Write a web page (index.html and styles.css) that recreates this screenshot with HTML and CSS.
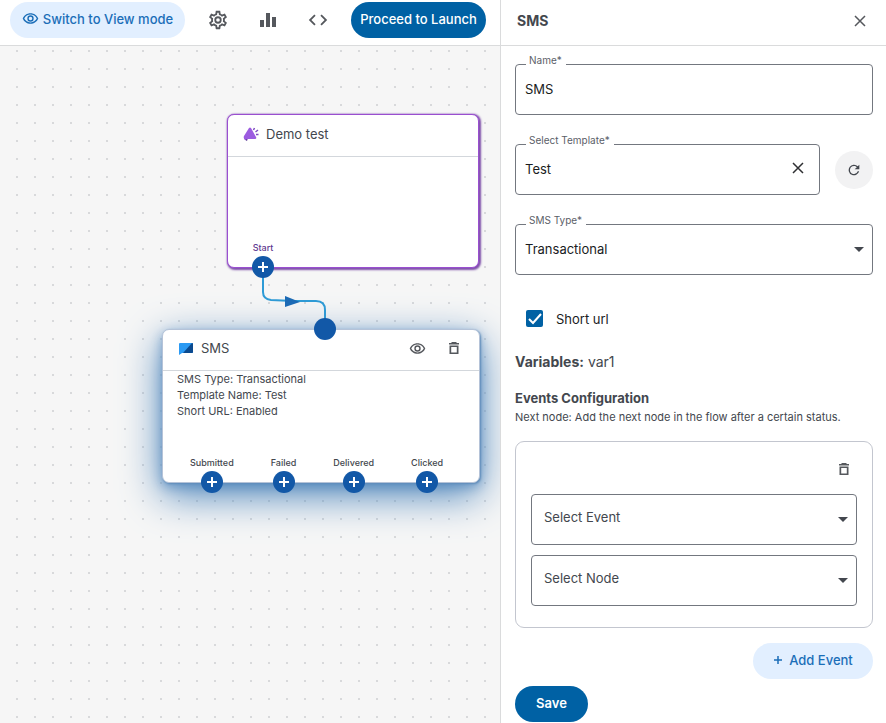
FILE: index.html
```html
<!DOCTYPE html>
<html lang="en">
  <head>
    <meta charset="UTF-8" />
    <meta name="viewport" content="width=device-width, initial-scale=1.0" />
    <title>Campaign Flow</title>
    <link rel="stylesheet" href="styles.css">
  </head>
  <body>
    <main class="workspace">
      <header class="toolbar">
        <button type="button" class="btn btn-light btn-view">
          <svg class="icon" viewBox="0 0 24 24" width="17" height="17"><path d="M12 6.500c3.800 0 7.200 2.100 8.800 5.500-1.600 3.400-5 5.500-8.800 5.500S4.800 15.400 3.200 12C4.800 8.600 8.200 6.500 12 6.500m0-2C7 4.500 2.700 7.600 1 12c1.700 4.400 6 7.500 11 7.500s9.300-3.100 11-7.500c-1.700-4.400-6-7.500-11-7.500zm0 5a2.500 2.500 0 0 1 0 5 2.500 2.500 0 0 1 0-5m0-2a4.500 4.500 0 1 0 0 9 4.500 4.500 0 0 0 0-9z"/></svg>
          Switch to View mode
        </button>
        <div class="tools">
          <button type="button" class="icon-btn" aria-label="Settings">
            <svg class="icon" viewBox="0 0 24 24" width="22" height="22"><path d="M19.430 12.980c.04-.32.07-.64.07-.98s-.03-.66-.07-.98l2.110-1.650c.19-.15.24-.42.12-.64l-2-3.460c-.09-.16-.26-.25-.44-.25-.06 0-.12.010-.17.030l-2.490 1c-.52-.4-1.080-.73-1.690-.98l-.38-2.650C14.460 2.180 14.250 2 14 2h-4c-.25 0-.46.18-.49.42l-.38 2.650c-.61.25-1.170.59-1.690.98l-2.490-1c-.06-.02-.12-.03-.18-.03-.17 0-.34.09-.43.25l-2 3.460c-.13.22-.07.49.12.64l2.110 1.650c-.04.32-.07.65-.07.98s.03.66.07.98l-2.110 1.650c-.19.15-.24.42-.12.64l2 3.460c.09.16.26.25.44.25.06 0 .12-.01.17-.03l2.490-1c.52.4 1.080.73 1.690.98l.38 2.650c.03.24.24.42.49.42h4c.25 0 .46-.18.49-.42l.38-2.650c.61-.25 1.170-.59 1.690-.98l2.490 1c.06.02.12.03.18.03.17 0 .34-.09.43-.25l2-3.460c.12-.22.07-.49-.12-.64zm-1.980-1.710c.04.31.05.52.05.73s-.02.43-.05.73l-.14 1.130.89.7 1.080.84-.7 1.210-1.270-.51-1.040-.42-.9.68c-.43.32-.84.56-1.250.73l-1.060.43-.16 1.130-.2 1.350h-1.400l-.19-1.350-.16-1.130-1.060-.43c-.43-.18-.83-.41-1.230-.71l-.91-.7-1.060.43-1.270.51-.7-1.210 1.080-.84.89-.7-.14-1.130c-.03-.31-.05-.54-.05-.74s.02-.43.05-.73l.14-1.130-.89-.7-1.080-.84.7-1.210 1.270.51 1.040.42.9-.68c.43-.32.84-.56 1.250-.73l1.060-.43.16-1.130.2-1.350h1.390l.19 1.350.16 1.130 1.060.43c.43.18.83.41 1.230.71l.91.7 1.060-.43 1.270-.51.7 1.210-1.070.85-.89.7zM12 8a4 4 0 1 0 0 8 4 4 0 0 0 0-8m0 6a2 2 0 1 1 0-4 2 2 0 0 1 0 4z"/></svg>
          </button>
          <button type="button" class="icon-btn" aria-label="Analytics">
            <svg class="icon" viewBox="0 0 22 22" width="22" height="22"><path d="M3 11h4v7H3zM9 4h4v14H9zM15 8h4v10h-4z"/></svg>
          </button>
          <button type="button" class="icon-btn" aria-label="Code">
            <svg class="icon" viewBox="0 0 24 24" width="22" height="22"><path d="M9.400 16.600 4.800 12l4.600-4.600L8 6l-6 6 6 6zm5.200 0 4.600-4.600-4.600-4.600L16 6l6 6-6 6z"/></svg>
          </button>
        </div>
        <button type="button" class="btn btn-primary btn-launch">Proceed to Launch</button>
      </header>

      <section class="canvas">
        <svg class="edge" width="80" height="60" viewBox="0 0 80 60">
          <path class="edge-line" d="M9 0v16q0 7 8 8l22 1h23q9 0 9 9v14"/>
          <path class="edge-arrow" d="M31 20v11l15-5z"/>
        </svg>

        <article class="node node-start">
          <div class="node-head">
            <svg viewBox="0 0 16 16" width="16" height="16">
              <path fill="#5c3a96" d="M1 10q0 4 3 5l1-3z"/>
              <path fill="#9c5be0" d="M6 2q1-1 2 0l5 9q1 2-1 2H4l-2 1q-2-2-1-4z"/>
              <path fill="none" stroke="#7e4cc0" stroke-width="1.500" d="M10.500 4l1-2M12.500 6l2.500-2M13 8.500h2.500"/>
            </svg>
            <span class="node-title">Demo test</span>
          </div>
          <div class="ports">
            <div class="port">
              <span>Start</span>
              <button type="button" class="handle" aria-label="Add after start"><svg viewBox="0 0 10 10" width="10" height="10"><path d="M5 0v10M0 5h10"/></svg></button>
            </div>
          </div>
        </article>

        <article class="node node-sms">
          <span class="target"></span>
          <div class="node-head">
            <svg viewBox="0 0 16 16" width="16" height="16">
              <path fill="#2b9af3" d="M2 3h12q1 0 1 1v8q0 1-1 1H4l-3 2V4q0-1 1-1z"/>
              <path fill="#0b4a8f" d="M15 4v8q0 1-1 1H5l9-10q1 0 1 1z"/>
            </svg>
            <span class="node-title">SMS</span>
            <div class="node-actions">
              <button type="button" class="icon-btn" aria-label="Preview">
                <svg class="icon" viewBox="0 0 24 24" width="17" height="17"><path d="M12 6.500c3.800 0 7.200 2.100 8.800 5.500-1.600 3.400-5 5.500-8.800 5.500S4.800 15.400 3.200 12C4.800 8.600 8.200 6.500 12 6.500m0-2C7 4.500 2.700 7.600 1 12c1.700 4.400 6 7.500 11 7.500s9.300-3.100 11-7.500c-1.700-4.400-6-7.500-11-7.500zm0 5a2.500 2.500 0 0 1 0 5 2.500 2.500 0 0 1 0-5m0-2a4.500 4.500 0 1 0 0 9 4.500 4.500 0 0 0 0-9z"/></svg>
              </button>
              <button type="button" class="icon-btn" aria-label="Delete node">
                <svg class="icon" viewBox="0 0 16 16" width="16" height="16"><path d="M3 3h2l1-1h4l1 1h2v1.500H3zM3.500 5.500h9V14h-9zM5.200 7v5.500h5.600V7z" fill-rule="evenodd"/></svg>
              </button>
            </div>
          </div>
          <div class="node-body">
            <p>SMS Type: Transactional</p>
            <p>Template Name: Test</p>
            <p>Short URL: Enabled</p>
          </div>
          <div class="ports">
            <div class="port">
              <span>Submitted</span>
              <button type="button" class="handle" aria-label="Add after submitted"><svg viewBox="0 0 10 10" width="10" height="10"><path d="M5 0v10M0 5h10"/></svg></button>
            </div>
            <div class="port">
              <span>Failed</span>
              <button type="button" class="handle" aria-label="Add after failed"><svg viewBox="0 0 10 10" width="10" height="10"><path d="M5 0v10M0 5h10"/></svg></button>
            </div>
            <div class="port">
              <span>Delivered</span>
              <button type="button" class="handle" aria-label="Add after delivered"><svg viewBox="0 0 10 10" width="10" height="10"><path d="M5 0v10M0 5h10"/></svg></button>
            </div>
            <div class="port">
              <span>Clicked</span>
              <button type="button" class="handle" aria-label="Add after clicked"><svg viewBox="0 0 10 10" width="10" height="10"><path d="M5 0v10M0 5h10"/></svg></button>
            </div>
          </div>
        </article>
      </section>
    </main>

    <aside class="panel">
      <header class="panel-head">
        <h2>SMS</h2>
        <button type="button" class="icon-btn" aria-label="Close">
          <svg class="cross" viewBox="0 0 12 12" width="12" height="12"><path d="M1 1l10 10M11 1L1 11"/></svg>
        </button>
      </header>

      <form class="panel-body">
        <div class="field">
          <label for="name">Name*</label>
          <input type="text" id="name" value="SMS">
        </div>

        <div class="template-row">
          <div class="field">
            <label for="template">Select Template*</label>
            <input type="text" id="template" value="Test">
            <button type="button" class="icon-btn field-clear" aria-label="Clear template">
              <svg class="cross" viewBox="0 0 12 12" width="12" height="12"><path d="M1 1l10 10M11 1L1 11"/></svg>
            </button>
          </div>
          <button type="button" class="refresh" aria-label="Refresh templates">
            <svg class="icon" viewBox="0 0 24 24" width="16" height="16"><path d="M17.650 6.350A8 8 0 1 0 19.730 14h-2.080A6 6 0 1 1 12 6c1.660 0 3.140.69 4.220 1.780L13 11h7V4z"/></svg>
          </button>
        </div>

        <div class="field">
          <label for="type">SMS Type*</label>
          <select id="type">
            <option>Transactional</option>
            <option>Promotional</option>
          </select>
          <span class="caret"></span>
        </div>

        <label class="check">
          <input type="checkbox" checked>
          Short url
        </label>

        <p class="variables"><b>Variables:</b> var1</p>

        <h3>Events Configuration</h3>
        <p class="hint">Next node: Add the next node in the flow after a certain status.</p>

        <div class="event-card">
          <button type="button" class="icon-btn event-delete" aria-label="Delete event">
            <svg class="icon" viewBox="0 0 16 16" width="16" height="16"><path d="M3 3h2l1-1h4l1 1h2v1.500H3zM3.500 5.500h9V14h-9zM5.200 7v5.500h5.600V7z" fill-rule="evenodd"/></svg>
          </button>
          <div class="field field-empty">
            <select aria-label="Select Event">
              <option>Select Event</option>
            </select>
            <span class="caret"></span>
          </div>
          <div class="field field-empty">
            <select aria-label="Select Node">
              <option>Select Node</option>
            </select>
            <span class="caret"></span>
          </div>
        </div>

        <button type="button" class="btn btn-light btn-add">
          <svg class="plus" viewBox="0 0 10 10" width="10" height="10"><path d="M5 1v8M1 5h8"/></svg>
          Add Event
        </button>
        <button type="submit" class="btn btn-primary btn-save">Save</button>
      </form>
    </aside>
  </body>
</html>
```
FILE: styles.css
```css
* {
  box-sizing: border-box;
}

body {
  display: grid;
  grid-template-columns: minmax(0, 1fr) 386px;
  min-height: 100vh;
  margin: 0;
  font-family: Inter, "Liberation Sans", sans-serif;
  font-size: 13px;
  line-height: 16px;
  color: #43474e;
  background: #fff;
}

button,
input,
select {
  font: inherit;
  color: inherit;
}

button {
  display: flex;
  align-items: center;
  justify-content: center;
  padding: 0;
  border: none;
  background: none;
  cursor: pointer;
}

h2,
h3,
p {
  margin: 0;
}

.icon {
  fill: currentColor;
}

.icon-btn {
  color: #55585d;
}

.cross,
.plus {
  fill: none;
  stroke: currentColor;
  stroke-width: 1.5;
}

/* buttons */
.btn {
  height: 36px;
  padding-bottom: 2px;
  border-radius: 18px;
  font-weight: 500;
}

.btn-light {
  gap: 4px;
  background: #e2efff;
  color: #1b6eb8;
}

.btn-primary {
  background: #0061a4;
  color: #fff;
}

/* left side */
.workspace {
  display: flex;
  flex-direction: column;
  overflow: hidden;
}

.toolbar {
  display: flex;
  align-items: center;
  justify-content: space-between;
  height: 46px;
  padding: 0 14px 6px 10px;
  border-bottom: 1px solid #dadbdc;
}

.btn-view {
  width: 175px;
}

.btn-launch {
  width: 135px;
}

.tools {
  display: flex;
  gap: 28px;
}

.canvas {
  position: relative;
  flex: 1;
  overflow: hidden;
  background-color: #f6f6f6;
  background-image: radial-gradient(circle, #d8d9db 1px, transparent 1px);
  background-size: 18px 18px;
  background-position: 8px -4px;
}

.edge {
  position: absolute;
  left: 254px;
  top: 230px;
}

.edge-line {
  fill: none;
  stroke: #2e9bd6;
  stroke-width: 2;
}

.edge-arrow {
  fill: #1b6ab5;
}

.node {
  position: absolute;
  height: 154px;
  background: #fff;
  border-radius: 7px;
}

.node-start {
  left: 227px;
  top: 68px;
  width: 252px;
  border: 1px solid #9a4fd0;
  box-shadow: 0 0 1px #9a4fd0, 1px 1px 2px 1px #7d4fa8;
}

.node-sms {
  left: 162px;
  top: 283px;
  width: 318px;
  border: 1px solid #b5c3d8;
  box-shadow: 1px 1px 2px #5f8cba, 0 12px 40px #4a83ba, 0 4px 12px #8fb0d3;
}

.node-head {
  display: flex;
  align-items: center;
  gap: 7px;
  height: 42px;
  padding: 0 17px 4px 15px;
  border-bottom: 1px solid #d3d7dc;
}

.node-sms .node-head {
  height: 41px;
}

.node-actions {
  display: flex;
  gap: 20px;
  margin-left: auto;
}

.node-body {
  padding-left: 14px;
  font-size: 11px;
}

.ports {
  position: absolute;
  left: 27px;
  bottom: -11px;
  display: flex;
  gap: 37px;
}

.node-start .ports {
  left: 24px;
  color: #5f3a91;
}

.port {
  display: flex;
  flex-direction: column;
  align-items: center;
  font-size: 9px;
  font-weight: 500;
}

.handle {
  width: 22px;
  height: 22px;
  border-radius: 50%;
  background: #1258a7;
}

.handle path {
  stroke: #fff;
  stroke-width: 2;
}

.target {
  position: absolute;
  left: 151px;
  top: -12px;
  width: 22px;
  height: 22px;
  border-radius: 50%;
  background: #1258a7;
}

/* right side */
.panel {
  border-left: 1px solid #dadbdc;
  background: #fff;
}

.panel-head {
  display: flex;
  align-items: center;
  justify-content: space-between;
  height: 46px;
  padding: 0 20px 4px 16px;
  border-bottom: 1px solid #dadbdc;
}

.panel-head h2 {
  font-size: 14px;
  font-weight: 700;
}

.panel-body {
  display: flex;
  flex-direction: column;
  padding: 18px 13px 0 14px;
}

.field {
  position: relative;
  flex: 1 0 auto;
  margin-bottom: 29px;
  color: #1a1c1e;
}

.field label {
  position: absolute;
  left: 11px;
  top: -12px;
  padding: 0 4px 0 3px;
  background: #fff;
  color: #5b6068;
  font-size: 10px;
}

.field input,
.field select {
  display: block;
  width: 100%;
  height: 51px;
  padding: 0 32px 2px 9px;
  border: 1px solid #73777f;
  border-radius: 4px;
  background: #fff;
  appearance: none;
}

.field-clear {
  position: absolute;
  right: 16px;
  top: 18px;
  color: #2f3033;
}

.caret {
  position: absolute;
  right: 9px;
  top: 23px;
  border: 5px solid transparent;
  border-top-color: #43474e;
  border-bottom: none;
  pointer-events: none;
}

.template-row {
  display: flex;
  gap: 15px;
}

.refresh {
  width: 38px;
  height: 38px;
  margin-top: 7px;
  border-radius: 50%;
  background: #f2f2f3;
}

.check {
  display: flex;
  align-items: center;
  gap: 13px;
  padding: 6px 11px;
  color: #1a1c1e;
}

.check input {
  width: 17px;
  height: 17px;
  margin: 0;
  border-radius: 2px;
  appearance: none;
  background: #0061a4 url('data:image/svg+xml,<svg xmlns="http://www.w3.org/2000/svg" viewBox="0 0 17 17"><path d="M3 9l4 4 8-9" fill="none" stroke="white" stroke-width="2"/></svg>');
}

.variables {
  margin-top: 21px;
  font-size: 14px;
}

.panel-body h3 {
  margin-top: 20px;
  font-size: 13px;
  font-weight: 700;
}

.hint {
  margin-top: 3px;
  font-size: 11px;
}

.event-card {
  margin-top: 16px;
  padding: 19px 15px 21px;
  border: 1px solid #c3c6cf;
  border-radius: 9px;
}

.event-delete {
  margin: 0 5px 17px auto;
}

.field-empty {
  margin-bottom: 10px;
  color: #43474e;
}

.field-empty:last-child {
  margin-bottom: 0;
}

.field-empty select {
  padding: 0 32px 5px 12px;
}

.btn-add {
  align-self: flex-end;
  gap: 6px;
  width: 120px;
  margin-top: 15px;
}

.btn-save {
  width: 73px;
  margin-top: 7px;
  font-weight: 600;
}
```
